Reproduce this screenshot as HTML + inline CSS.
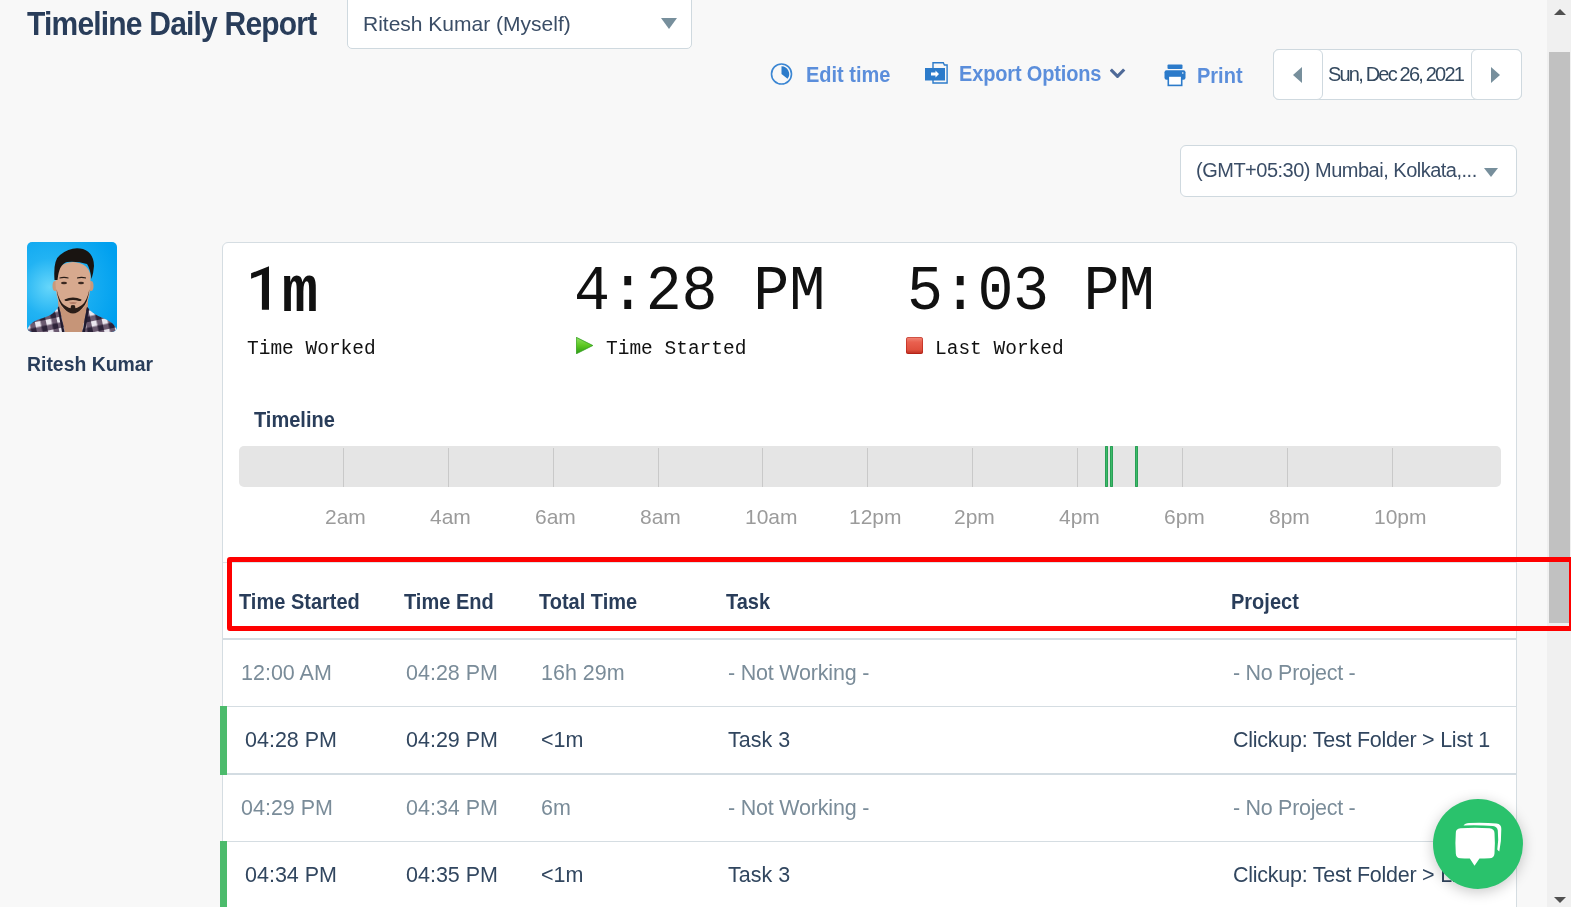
<!DOCTYPE html>
<html><head><meta charset="utf-8">
<style>
html,body{margin:0;padding:0;}
body{width:1571px;height:907px;overflow:hidden;position:relative;background:#f8f8f8;font-family:"Liberation Sans",sans-serif;}
.a{position:absolute;line-height:1;white-space:pre;will-change:transform;}
.navy{color:#293d5a;}
.b{font-weight:bold;}
.sy{transform:scaleY(1.07);transform-origin:0 17px;}
.box{position:absolute;background:#fff;border:1px solid #cfd9df;box-sizing:border-box;}
.mono{font-family:"Liberation Mono",monospace;color:#111;}
.tl{position:absolute;top:448px;height:39px;width:1px;background:#c9c9c9;}
.lbl{position:absolute;top:505.5px;font-size:21px;line-height:1;color:#9b9b9b;white-space:pre;will-change:transform;}
.gm{position:absolute;top:446px;height:41px;width:3px;background:#3cba69;box-shadow:inset 0 0 0 1px #2a9f56;border-radius:1px;}
.row{position:absolute;left:223px;width:1293px;background:#fff;}
.cell{position:absolute;font-size:21.5px;line-height:1;white-space:pre;will-change:transform;transform:scaleY(1.06);transform-origin:0 18px;}
.dim{color:#7a8c99;}
.dark{color:#31465f;}
</style></head><body>

<!-- header -->
<div class="a navy b" style="left:27px;top:9.5px;font-size:30px;letter-spacing:-0.8px;transform:scaleY(1.1);transform-origin:0 25px;">Timeline Daily Report</div>
<div class="box" style="left:347px;top:-6px;width:345px;height:55px;border-radius:5px;"></div>
<div class="a" style="left:363px;top:13px;font-size:21px;color:#3a4d66;">Ritesh Kumar (Myself)</div>
<div style="position:absolute;left:661px;top:18px;width:0;height:0;border-left:8px solid transparent;border-right:8px solid transparent;border-top:11px solid #778f9c;"></div>

<!-- toolbar -->
<svg style="position:absolute;left:770px;top:62px" width="24" height="24" viewBox="0 0 24 24">
  <circle cx="11.5" cy="12" r="10" fill="none" stroke="#3b86d3" stroke-width="1.6"/>
  <path d="M11.5 4.2 A7.8 7.8 0 0 1 17.5 16.8 L11.5 12 Z" fill="#2c7bca"/>
</svg>
<div class="a b sy" style="left:806px;top:65px;font-size:20px;color:#5b8edb;">Edit time</div>

<svg style="position:absolute;left:924px;top:61px" width="26" height="24" viewBox="0 0 26 24">
  <path d="M9 1.8 H19.3 L20.4 4 H23.1 V22 H9 Z" fill="none" stroke="#2c7bca" stroke-width="1.4"/>
  <rect x="1" y="7" width="20" height="12.5" fill="#2c7bca"/>
  <path d="M7 11.5 H11.5 V9.5 L15 13 L11.5 16.5 V14.5 H7 Z" fill="#fff"/>
</svg>
<div class="a b sy" style="left:959px;top:64px;font-size:20px;letter-spacing:-0.15px;color:#5b8edb;">Export Options</div>
<svg style="position:absolute;left:1110px;top:68px" width="16" height="10" viewBox="0 0 16 10">
  <path d="M0.8 1.5 L7.5 8.3 L14.2 1.5" fill="none" stroke="#4f6a98" stroke-width="3.2"/>
</svg>

<svg style="position:absolute;left:1163px;top:63px" width="24" height="24" viewBox="0 0 24 24">
  <rect x="4.5" y="1.5" width="15" height="4.5" rx="1" fill="#2c7bca"/>
  <rect x="1.5" y="7.3" width="21" height="9.5" rx="2" fill="#2c7bca"/>
  <rect x="5.3" y="13" width="13.4" height="9.4" fill="#fff" stroke="#2c7bca" stroke-width="1.6"/>
  <circle cx="19.8" cy="10" r="0.8" fill="#fff"/>
</svg>
<div class="a b sy" style="left:1197px;top:66px;font-size:20px;color:#5b8edb;">Print</div>

<div class="box" style="left:1273px;top:49px;width:249px;height:51px;border-radius:6px;"></div>
<div class="box" style="left:1273px;top:49px;width:50px;height:51px;border-radius:6px;"></div>
<div class="box" style="left:1471px;top:49px;width:51px;height:51px;border-radius:6px;"></div>
<div style="position:absolute;left:1293px;top:67px;width:0;height:0;border-top:8px solid transparent;border-bottom:8px solid transparent;border-right:9.5px solid #778f9c;"></div>
<div style="position:absolute;left:1491px;top:67px;width:0;height:0;border-top:8px solid transparent;border-bottom:8px solid transparent;border-left:9.5px solid #778f9c;"></div>
<div class="a" style="left:1328px;top:64px;font-size:20px;letter-spacing:-1.8px;color:#34495f;">Sun, Dec 26, 2021</div>

<div class="box" style="left:1180px;top:145px;width:337px;height:52px;border-radius:6px;"></div>
<div class="a" style="left:1196px;top:160px;font-size:20px;letter-spacing:-0.5px;color:#3a4d66;">(GMT+05:30) Mumbai, Kolkata,...</div>
<div style="position:absolute;left:1483.5px;top:168px;width:0;height:0;border-left:7.5px solid transparent;border-right:7.5px solid transparent;border-top:9.5px solid #778f9c;"></div>

<!-- avatar -->
<svg id="avatar" style="position:absolute;left:27px;top:242px;" width="90" height="90" viewBox="0 0 90 90">
<defs>
 <radialGradient id="bg" cx="0.25" cy="0.5" r="0.8">
  <stop offset="0" stop-color="#66d6fa"/><stop offset="0.4" stop-color="#22b3f3"/><stop offset="1" stop-color="#00a0ef"/>
 </radialGradient>
 <clipPath id="rc"><rect width="90" height="90" rx="5"/></clipPath>
 <pattern id="chk" width="11" height="11" patternUnits="userSpaceOnUse" patternTransform="rotate(-12) translate(2 3)">
  <rect width="11" height="11" fill="#6b5a70"/>
  <rect width="5.5" height="5.5" fill="#eae6ee"/>
  <rect x="5.5" y="5.5" width="5.5" height="5.5" fill="#2c2238"/>
 </pattern>
</defs>
<g clip-path="url(#rc)">
 <rect width="90" height="90" fill="url(#bg)"/>
 <path d="M31 58 Q31 75 36 90 L57 90 Q61 75 61 58 Z" fill="#c69578"/>
 <path d="M0 90 L1 86 Q4 79 16 76 Q27 73 32 64 L38 90 Z" fill="url(#chk)"/>
 <path d="M90 90 L89 86 Q86 80 76 76 Q65 72 60 65 L55 90 Z" fill="url(#chk)"/>
 <path d="M32 64 L37.5 90 L35 90 L30.5 66 Z" fill="#1f1a2e"/>
 <path d="M60 65 L55.5 90 L58 90 L62 67 Z" fill="#1f1a2e"/>
 <ellipse cx="28" cy="44" rx="2.5" ry="5" fill="#c8997c"/>
 <ellipse cx="64" cy="44" rx="2.5" ry="5" fill="#c8997c"/>
 <path d="M28.5 34 Q28 56 34 64 Q40 71.5 46 71.5 Q52 71.5 58 64 Q64 56 63.5 34 Q62 21 46 20 Q30 21 28.5 34 Z" fill="#d7a98e"/>
 <path d="M29.5 47 Q31 61 37 66.5 Q41.5 71.5 46 71.5 Q50.5 71.5 55 66.5 Q61 61 62.5 47 Q60 59 55 63 Q50 66.5 46 66.5 Q42 66.5 37 63 Q32 59 29.5 47 Z" fill="#2a1d17"/>
 <path d="M37.5 57.5 Q46 53.5 54.5 57.5 Q54.5 59.5 52 59 Q46 57 40 59 Q37.5 59.5 37.5 57.5 Z" fill="#2a1d17"/>
 <path d="M44 63.5 Q46 62.5 48 63.5 L48.5 67 L43.5 67 Z" fill="#2a1d17"/>
 <path d="M42 60.5 Q46 59.5 50 60.5 Q49 62 46 62 Q43 62 42 60.5 Z" fill="#b27c66"/>
 <path d="M27.5 38 Q26 18 33 13 Q44 4 56 7 Q67 11 67 24 Q66.5 31 64.5 37 Q63 26 60 22 Q50 19 40 20 Q32 22 30.5 38 Z" fill="#191411"/>
 <ellipse cx="37" cy="41" rx="3" ry="1.3" fill="#3a2820"/>
 <ellipse cx="54" cy="41" rx="3" ry="1.3" fill="#3a2820"/>
 <path d="M32.5 35.5 Q37 34 41.5 35.5 L41.5 36.5 Q37 35.5 32.5 36.5 Z" fill="#2a1d17"/>
 <path d="M50 35.5 Q54.5 34 59 35.5 L59 36.5 Q54.5 35.5 50 36.5 Z" fill="#2a1d17"/>
</g>
</svg>
<div class="a navy b" style="left:27px;top:354.5px;font-size:19.4px;">Ritesh Kumar</div>

<!-- card -->
<div id="card" style="position:absolute;left:222px;top:242px;width:1295px;height:700px;background:#fff;border:1px solid #d5dde2;border-radius:6px;box-sizing:border-box;"></div>


<!-- stats -->
<svg style="position:absolute;left:244px;top:260px" width="30" height="56" viewBox="0 0 30 56"><path d="M7.1 13.3 L25 6.2 L25 49.7 L17.9 49.7 L17.9 14.5 L7.1 18.8 Z" fill="#111"/></svg><div class="a mono b" style="left:246px;top:265px;font-size:60px;transform:scaleY(1.1);transform-origin:0 46px;"> m</div>
<div class="a mono" style="left:574px;top:263px;font-size:60px;letter-spacing:-0.15px;transform:scaleY(1.06);transform-origin:0 46px;">4:28 PM</div>
<div class="a mono" style="left:907px;top:263px;font-size:60px;letter-spacing:-0.7px;transform:scaleY(1.06);transform-origin:0 46px;">5:03 PM</div>
<div class="a mono" style="left:247px;top:339.5px;font-size:19.5px;">Time Worked</div>
<svg style="position:absolute;left:576px;top:337px" width="17" height="17" viewBox="0 0 17 17"><defs><linearGradient id="gt" x1="0" y1="0" x2="0" y2="1"><stop offset="0" stop-color="#8fe060"/><stop offset="0.5" stop-color="#5cc722"/><stop offset="1" stop-color="#2c9a14"/></linearGradient></defs><path d="M0.3 0.3 L16.8 8.5 L0.3 16.8 Z" fill="url(#gt)" stroke="#2f9d1c" stroke-width="0.8" stroke-linejoin="round"/></svg>
<div class="a mono" style="left:606px;top:339.5px;font-size:19.5px;">Time Started</div>
<div style="position:absolute;left:906px;top:337px;width:17px;height:17px;border-radius:2.5px;background:linear-gradient(#f28a7a,#e9604f 30%,#e0503e 75%,#b92a1e);box-shadow:inset 0 0 0 0.8px rgba(170,20,10,0.6);"></div>
<div class="a mono" style="left:935px;top:339.5px;font-size:19.5px;">Last Worked</div>

<div class="a navy b sy" style="left:254px;top:410px;font-size:20px;">Timeline</div>
<div style="position:absolute;left:239px;top:446px;width:1262px;height:41px;background:#e5e5e5;border-radius:5px;"></div>
<div class="tl" style="left:343px"></div>
<div class="tl" style="left:448px"></div>
<div class="tl" style="left:553px"></div>
<div class="tl" style="left:658px"></div>
<div class="tl" style="left:762px"></div>
<div class="tl" style="left:867px"></div>
<div class="tl" style="left:972px"></div>
<div class="tl" style="left:1077px"></div>
<div class="tl" style="left:1182px"></div>
<div class="tl" style="left:1287px"></div>
<div class="tl" style="left:1392px"></div>
<div class="lbl" style="left:325.0px">2am</div>
<div class="lbl" style="left:429.9px">4am</div>
<div class="lbl" style="left:534.7px">6am</div>
<div class="lbl" style="left:639.6px">8am</div>
<div class="lbl" style="left:744.5px">10am</div>
<div class="lbl" style="left:849.4px">12pm</div>
<div class="lbl" style="left:954.3px">2pm</div>
<div class="lbl" style="left:1059.1px">4pm</div>
<div class="lbl" style="left:1164.0px">6pm</div>
<div class="lbl" style="left:1268.9px">8pm</div>
<div class="lbl" style="left:1373.8px">10pm</div>
<div class="gm" style="left:1105px"></div>
<div class="gm" style="left:1110px"></div>
<div class="gm" style="left:1135px"></div>

<!-- table -->
<div style="position:absolute;left:223px;top:562px;width:1293px;height:1px;background:#dde3e7;"></div>
<div class="a navy b sy" style="left:239px;top:591.5px;font-size:20px;">Time Started</div>
<div class="a navy b sy" style="left:404px;top:591.5px;font-size:20px;">Time End</div>
<div class="a navy b sy" style="left:539px;top:591.5px;font-size:20px;">Total Time</div>
<div class="a navy b sy" style="left:726px;top:591.5px;font-size:20px;">Task</div>
<div class="a navy b sy" style="left:1231px;top:591.5px;font-size:20px;">Project</div>
<div style="position:absolute;left:223px;top:638px;width:1293px;height:2px;background:#d3dce2;"></div>

<div class="cell dim" style="left:241px;top:663px;">12:00 AM</div>
<div class="cell dim" style="left:406px;top:663px;">04:28 PM</div>
<div class="cell dim" style="left:541px;top:663px;">16h 29m</div>
<div class="cell dim" style="left:728px;top:663px;letter-spacing:-0.2px;">- Not Working -</div>
<div class="cell dim" style="left:1233px;top:663px;letter-spacing:-0.3px;">- No Project -</div>
<div style="position:absolute;left:223px;top:706px;width:1293px;height:1px;background:#d5dde2;"></div>

<div style="position:absolute;left:220px;top:706px;width:7px;height:69px;background:#4cbb6c;"></div>
<div class="cell dark" style="left:245px;top:730px;">04:28 PM</div>
<div class="cell dark" style="left:406px;top:730px;">04:29 PM</div>
<div class="cell dark" style="left:541px;top:730px;">&lt;1m</div>
<div class="cell dark" style="left:728px;top:730px;">Task 3</div>
<div class="cell dark" style="left:1233px;top:730px;letter-spacing:-0.25px;">Clickup: Test Folder &gt; List 1</div>
<div style="position:absolute;left:227px;top:773px;width:1289px;height:2px;background:#d3dce2;"></div>

<div class="cell dim" style="left:241px;top:798px;">04:29 PM</div>
<div class="cell dim" style="left:406px;top:798px;">04:34 PM</div>
<div class="cell dim" style="left:541px;top:798px;">6m</div>
<div class="cell dim" style="left:728px;top:798px;letter-spacing:-0.2px;">- Not Working -</div>
<div class="cell dim" style="left:1233px;top:798px;letter-spacing:-0.3px;">- No Project -</div>
<div style="position:absolute;left:223px;top:841px;width:1293px;height:1px;background:#d5dde2;"></div>

<div style="position:absolute;left:220px;top:841px;width:7px;height:70px;background:#4cbb6c;"></div>
<div class="cell dark" style="left:245px;top:865px;">04:34 PM</div>
<div class="cell dark" style="left:406px;top:865px;">04:35 PM</div>
<div class="cell dark" style="left:541px;top:865px;">&lt;1m</div>
<div class="cell dark" style="left:728px;top:865px;">Task 3</div>
<div class="cell dark" style="left:1233px;top:865px;letter-spacing:-0.25px;">Clickup: Test Folder &gt; List 1</div>

<!-- scrollbar -->
<div style="position:absolute;left:1547px;top:0;width:24px;height:907px;background:#f0f0f0;"></div>
<div style="position:absolute;left:1549px;top:52px;width:21px;height:571px;background:#c1c1c1;"></div>
<div style="position:absolute;left:1553.5px;top:8.5px;width:0;height:0;border-left:6px solid transparent;border-right:6px solid transparent;border-bottom:6.5px solid #505050;"></div>
<div style="position:absolute;left:1553.5px;top:896.5px;width:0;height:0;border-left:6px solid transparent;border-right:6px solid transparent;border-top:6.5px solid #505050;"></div>

<!-- red highlight -->
<div style="position:absolute;left:227px;top:557px;width:1347px;height:74px;border:5px solid #fe0000;border-radius:3px;box-sizing:border-box;"></div>

<!-- chat -->
<div style="position:absolute;left:1433px;top:799px;width:90px;height:90px;border-radius:50%;background:#2ac26c;box-shadow:0 3px 14px rgba(0,0,0,0.22);"></div>
<svg style="position:absolute;left:1433px;top:799px" width="90" height="90" viewBox="0 0 90 90">
  <path d="M30.5 26.5 Q32 24 36 24 Q52 23.5 63.5 24.5 Q68.5 25 68.3 30 Q68.5 42 66.3 52.5 Q65.5 52 64.3 50.5 Q65.8 40 64.8 31.5 Q64.3 27.5 60 27 Q46 26 30.5 26.5 Z" fill="#fff"/>
  <path d="M22.8 34 Q22.6 29.6 27.5 29.2 Q42 28.2 56.5 29.2 Q61.3 29.6 61.5 34 Q62.3 44.5 61.5 54.5 Q61.2 59 56.5 59.3 Q51 59.6 46.5 59.6 L41.5 66.7 L36.8 59.6 Q31 59.6 27.5 59.3 Q23 59 22.8 54.5 Q22 44 22.8 34 Z" fill="#fff"/>
</svg>
</body></html>
